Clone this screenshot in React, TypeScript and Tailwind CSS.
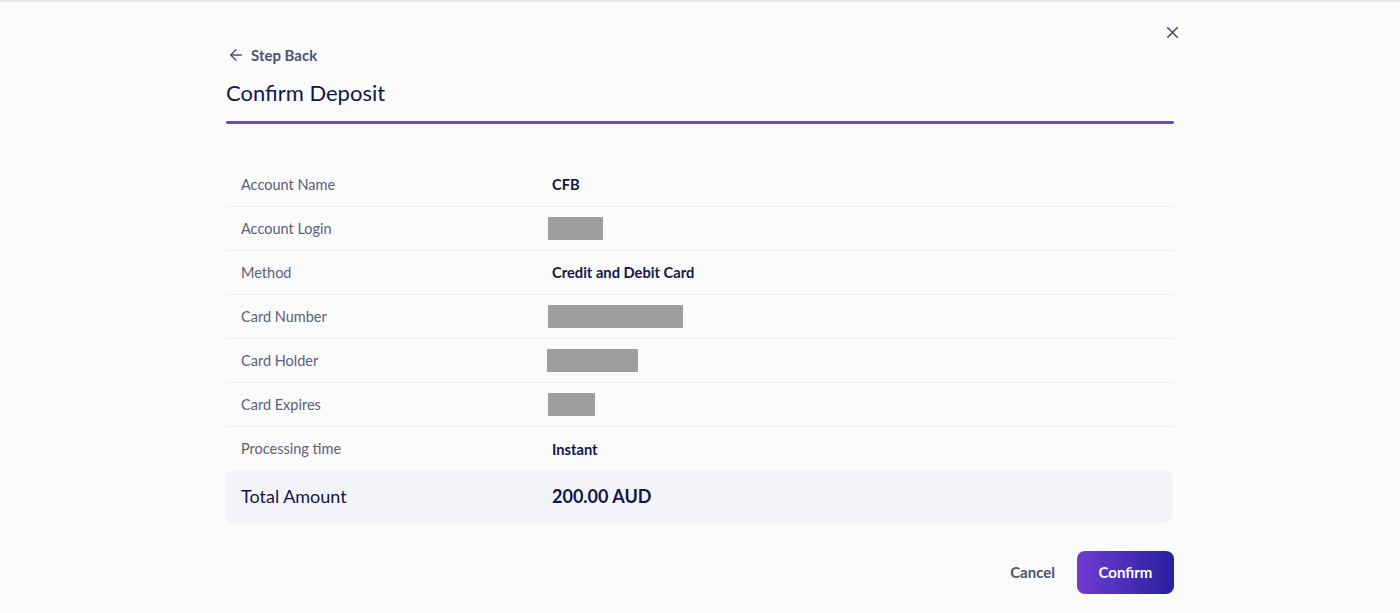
import { ArrowLeft, X } from 'lucide-react'

type Row = { label: string; value?: string; redact?: number }

const rows: Row[] = [
  { label: 'Account Name', value: 'CFB' },
  { label: 'Account Login', redact: 55 },
  { label: 'Method', value: 'Credit and Debit Card' },
  { label: 'Card Number', redact: 135 },
  { label: 'Card Holder', redact: 91 },
  { label: 'Card Expires', redact: 47 },
  { label: 'Processing time', value: 'Instant' },
]

const redactWidths: Record<number, string> = {
  55: 'w-[55px] ml-[-4px]',
  135: 'w-[135px] ml-[-4px]',
  91: 'w-[91px] ml-[-5px]',
  47: 'w-[47px] ml-[-4px]',
}

export default function App() {
  return (
    <div className="min-h-[613px] w-full bg-[#fbfbfc] border-t-2 border-[#e6e7ea] font-['Lato','Noto_Sans',sans-serif]">
      <div className="mx-auto w-[948px] relative pt-[42px]">
        <button className="absolute right-[-8px] top-[21px] text-[#4a4e6a]">
          <X size={19} strokeWidth={2} />
        </button>

        <div className="flex items-center gap-[6px] text-[#4b5373] text-[15px] font-bold h-[22px]">
          <ArrowLeft size={18} strokeWidth={2} className="ml-[1px]" />
          <span>Step Back</span>
        </div>

        <h1 className="mt-[13px] text-[22px] leading-[28px] text-[#14164a]">Confirm Deposit</h1>

        <div className="mt-[14px] h-[3px] rounded-full bg-[#7447c4]" />

        <div className="mt-[39px]">
          {rows.map((r, i) => (
            <div
              key={r.label}
              className={`flex items-center h-[44px] ${i < rows.length - 1 ? 'border-b border-[#eceef2]' : ''}`}
            >
              <div className="w-[326px] pl-[15px] text-[14.5px] text-[#5a6178]">{r.label}</div>
              {r.value ? (
                <div className="text-[14.7px] font-bold text-[#14164a]">{r.value}</div>
              ) : (
                <div className={`h-[23px] bg-[#9e9e9e] ${redactWidths[r.redact ?? 55]}`} />
              )}
            </div>
          ))}
          <div className="flex items-center h-[50px] w-[946px] rounded-md bg-[#f3f4f7] shadow-[0_1px_3px_rgba(0,0,0,0.06)]">
            <div className="w-[326px] pl-[15px] text-[18px] text-[#14164a]">Total Amount</div>
            <div className="text-[18px] font-bold text-[#14164a]">200.00 AUD</div>
          </div>
        </div>

        <div className="mt-[30px] flex justify-end items-center gap-[22px]">
          <button className="text-[15px] font-bold text-[#4b5373]">Cancel</button>
          <button className="h-[43px] w-[97px] rounded-lg bg-gradient-to-r from-[#6f3bd2] to-[#27209e] text-white text-[15px] font-bold">
            Confirm
          </button>
        </div>
      </div>
    </div>
  )
}
